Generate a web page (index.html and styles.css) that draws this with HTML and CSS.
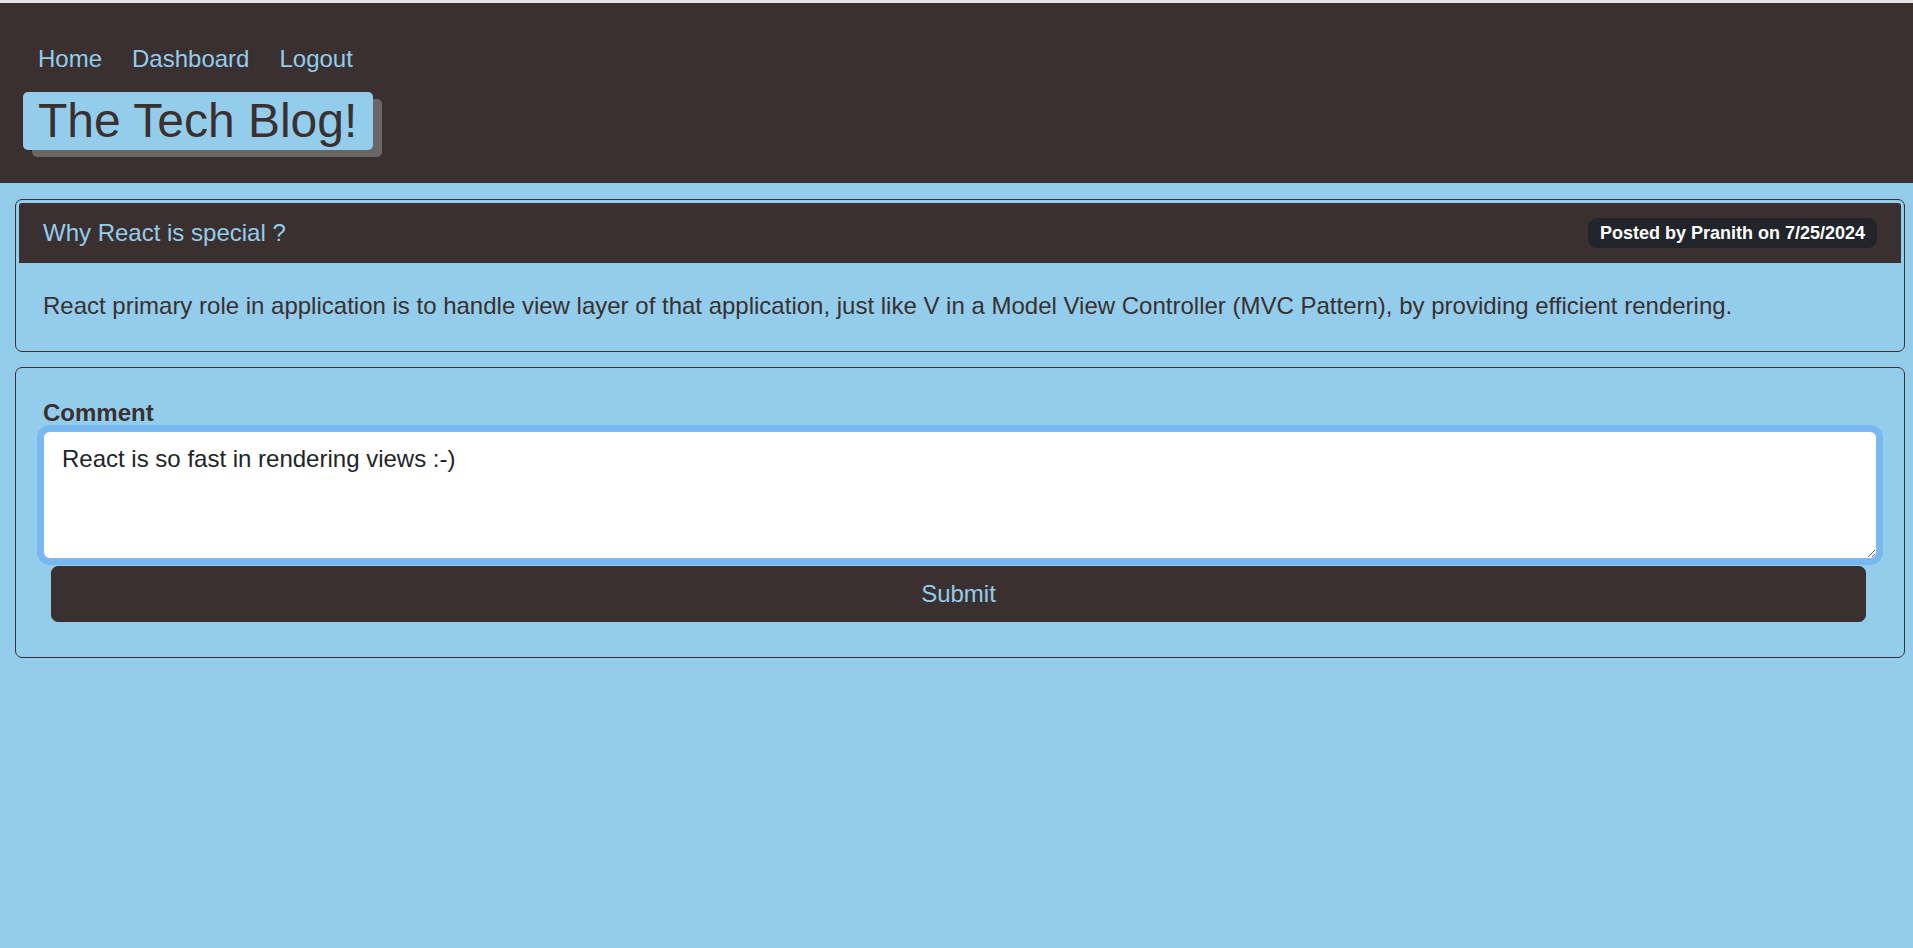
FILE: index.html
```html
<!DOCTYPE html>
<html lang="en">
<head>
<meta charset="utf-8">
<title>The Tech Blog!</title>
<link rel="stylesheet" href="styles.css">
</head>
<body>
<header class="site-header">
  <nav class="nav">
    <a href="#" class="nav-link">Home</a>
    <a href="#" class="nav-link">Dashboard</a>
    <a href="#" class="nav-link">Logout</a>
  </nav>
  <h1 class="brand">The Tech Blog!</h1>
</header>
<main class="main">
  <article class="card">
    <div class="card-header">
      <h2 class="post-title">Why React is special ?</h2>
      <span class="badge">Posted by Pranith on 7/25/2024</span>
    </div>
    <div class="post-body">
      <p class="post-text">React primary role in application is to handle view layer of that application, just like V in a Model View Controller (MVC Pattern), by providing efficient rendering.</p>
    </div>
  </article>
  <section class="card comment-card">
    <form class="comment-form">
      <label class="label" for="comment">Comment</label>
      <textarea id="comment" class="textarea" rows="3">React is so fast in rendering views :-)</textarea>
      <button type="button" class="btn">Submit</button>
    </form>
  </section>
</main>
</body>
</html>
```

FILE: styles.css
```css
html {
  background: #94cdeb;
  font-size: 24px;
}

body {
  margin: 0;
  min-height: 945px;
  border-top: 3px solid #e4e4e4;
  background: #94cdeb;
  font-family: "Liberation Sans", Arial, sans-serif;
  font-size: 24px;
  line-height: 1.5;
  color: #3a3030;
}

.site-header {
  display: flex;
  flex-direction: column;
  align-items: flex-start;
  background: #3a3030;
  padding: 38px 23px 33px;
}

.nav {
  display: flex;
}

.nav-link {
  padding: 0 15px;
  color: #94cdeb;
  text-decoration: none;
  line-height: 36px;
}

.brand {
  margin: 15px 0 0;
  padding: 0 16px 0 15px;
  font-size: 48px;
  font-weight: 400;
  line-height: 57.6px;
  color: #3a3030;
  background: #94cdeb;
  border-radius: 5px;
  box-shadow: 9px 7px 0 #6b6563;
}

.main {
  padding: 16px 8px 0 15px;
}

.card {
  border: 1px solid #3a3030;
  border-radius: 7px;
  padding: 3px;
}

.comment-card {
  margin-top: 15px;
}

.card-header {
  display: flex;
  justify-content: space-between;
  align-items: center;
  padding: 12px 24px;
  background: #3a3030;
  border-radius: 3px 3px 0 0;
}

.post-title {
  margin: 0;
  font-size: 24px;
  font-weight: 400;
  line-height: 36px;
  color: #94cdeb;
}

.badge {
  padding: 6px 12px;
  font-size: 18px;
  font-weight: 700;
  line-height: 1;
  color: #fff;
  background: #212529;
  border-radius: 9px;
}

.post-body {
  padding: 25px 24px 24px;
}

.post-text {
  margin: 0;
}

.comment-form {
  display: flex;
  flex-direction: column;
  padding: 24px 24px 25px;
}

.label {
  display: block;
  font-weight: 700;
  line-height: 36px;
}

.textarea {
  box-sizing: border-box;
  width: 100%;
  height: 128px;
  margin: 0;
  padding: 9px 18px;
  font-family: inherit;
  font-size: 24px;
  line-height: 1.5;
  color: #212529;
  background: #fff;
  border: 1px solid #86b7fe;
  border-radius: 7px;
  box-shadow: 0 0 0 6px rgba(13, 110, 253, 0.22);
  outline: none;
}

.btn {
  margin: 7px 11px 7px 8px;
  padding: 9px 12px;
  font-family: inherit;
  font-size: 24px;
  line-height: 36px;
  color: #94cdeb;
  background: #3a3030;
  border: 1px solid #3a3030;
  border-radius: 7px;
  cursor: pointer;
}
```
